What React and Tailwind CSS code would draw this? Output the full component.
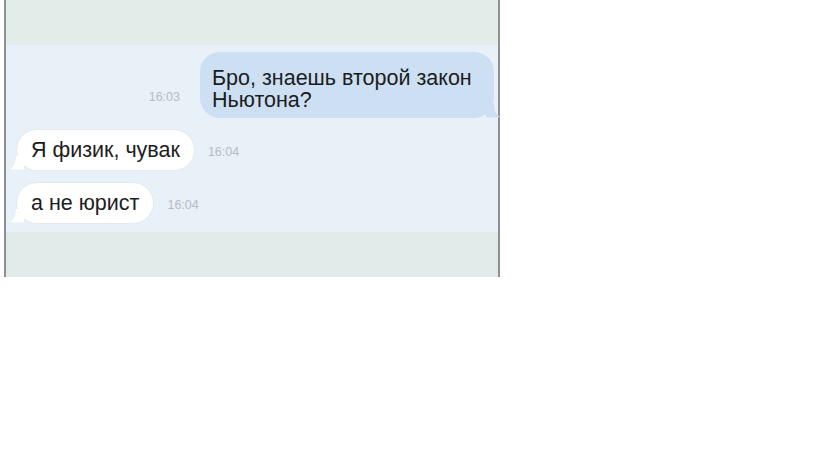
import React from "react";

// chat screenshot: one outgoing question, two incoming replies
const FONT = { fontFamily: '"Liberation Sans", Arial, sans-serif' };

function TailLeft() {
  return (
    <svg
      viewBox="0 0 14 14"
      className="absolute -left-[7px] bottom-0 h-[14px] w-[14px]"
      aria-hidden="true"
    >
      <path d="M14 0 L14 13 Q6 14 0 13 Q6 9 6 0 Z" fill="#ffffff" />
    </svg>
  );
}

function TailRight() {
  return (
    <svg
      viewBox="0 0 14 14"
      className="absolute -right-[6px] bottom-0 h-[14px] w-[14px]"
      aria-hidden="true"
    >
      <path d="M0 0 L0 13 Q8 14 14 13 Q8 9 8 0 Z" fill="#cddff3" />
    </svg>
  );
}

function Incoming({ text, time }) {
  return (
    <div className="flex items-center gap-[14px] pl-[11px]">
      <div className="relative rounded-[20px] bg-white pl-[14px] pr-[14px] py-[9px] text-[21.5px] leading-[22px] text-[#1c1c1c] shadow-[0_0_0_1px_#e3e9ef]">
        {text}
        <TailLeft />
      </div>
      <span className="mt-[4px] text-[12.5px] text-[#b6bcc2]">{time}</span>
    </div>
  );
}

export default function App() {
  return (
    <div className="min-h-[460px] bg-white" style={FONT}>
      <div className="ml-[4px] flex h-[277px] w-[496px] flex-col border-x-2 border-[#8d8f92]">
        <div className="h-[45px] bg-[#e2ece9]" />

        <div className="flex flex-1 flex-col bg-[#e8f0f8] pt-[7px]">
          <div className="flex items-end justify-end gap-[20px] pr-[4px]">
            <span className="mb-[11px] text-[12.5px] text-[#b6bcc2]">16:03</span>
            <div className="relative w-[294px] rounded-[20px] bg-[#cddff3] pl-[12px] pr-[10px] pt-[15px] pb-[7px] text-[21.5px] leading-[22px] text-[#1c1c1c]">
              Бро, знаешь второй закон Ньютона?
              <TailRight />
            </div>
          </div>

          <div className="mt-[12px] flex flex-col gap-[13px]">
            <Incoming text="Я физик, чувак" time="16:04" />
            <Incoming text="а не юрист" time="16:04" />
          </div>
        </div>

        <div className="h-[45px] bg-[#e1ebe9]" />
      </div>
    </div>
  );
}
